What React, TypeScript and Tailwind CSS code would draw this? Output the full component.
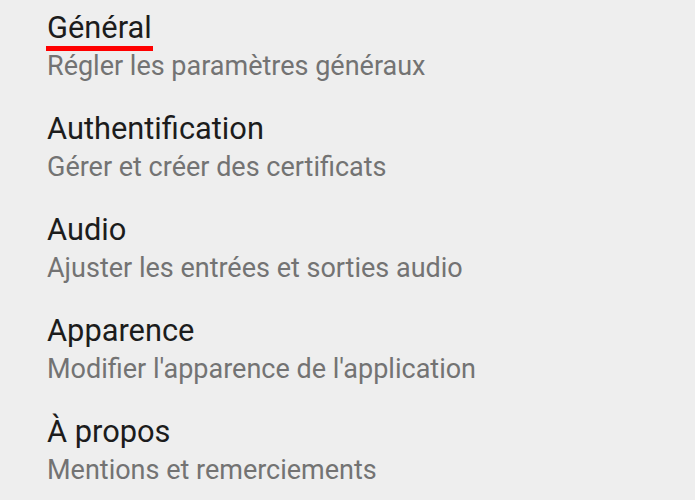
import React from "react";

const items = [
  { title: "Général", desc: "Régler les paramètres généraux", active: true },
  { title: "Authentification", desc: "Gérer et créer des certificats" },
  { title: "Audio", desc: "Ajuster les entrées et sorties audio" },
  { title: "Apparence", desc: "Modifier l'apparence de l'application" },
  { title: "À propos", desc: "Mentions et remerciements" },
];

const App = () => {
  return (
    <div className="min-h-[500px] w-full bg-[#eeeeee] pl-[47px] pt-[10px] font-['Roboto',sans-serif]">
      {items.map((item) => (
        <div key={item.title} className="flex flex-col h-[101px]">
          <div className="relative self-start text-[30.8px] leading-[36px] text-[#1c1c1c]">
            {item.title}
            {/* onglet actif */}
            {item.active && (
              <div className="absolute left-[-1px] top-[36px] w-[107px] h-[5px] bg-[#ff0000]" />
            )}
          </div>
          <div className="text-[27px] leading-[41px] text-[#737373]">{item.desc}</div>
        </div>
      ))}
    </div>
  );
};

export default App;
